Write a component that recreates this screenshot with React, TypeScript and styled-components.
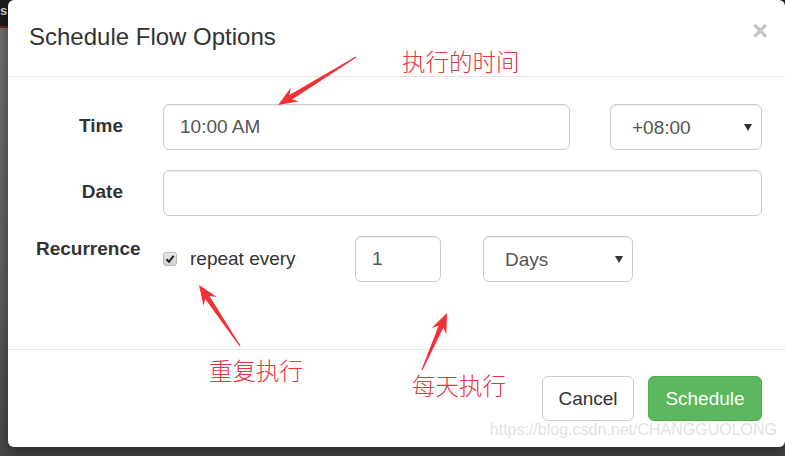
import React from "react";
import styled, { createGlobalStyle } from "styled-components";

const GlobalStyle = createGlobalStyle`
  html, body {
    margin: 0;
    padding: 0;
    background: #454545;
  }
  body {
    font-family: "Liberation Sans", Arial, sans-serif;
  }
`;

const Page = styled.div`
  position: relative;
  width: 785px;
  height: 456px;
  box-sizing: border-box;
  padding: 0 0 9px 8px;
  overflow: hidden;
  background: linear-gradient(
    to bottom,
    #1d1d1d 0,
    #1d1d1d 26px,
    #6e2626 26px,
    #6e2626 28px,
    #737373 28px,
    #626262 300px,
    #4a4a4a 447px,
    #454545 100%
  );
`;

const BehindText = styled.span`
  position: absolute;
  top: 3px;
  left: 0;
  color: #d8d8d8;
  font-size: 13px;
  font-weight: bold;
`;

const Modal = styled.div`
  position: relative;
  width: 777px;
  height: 447px;
  display: flex;
  flex-direction: column;
  background: #fff;
  border-radius: 6px;
  box-shadow: 0 5px 15px rgba(0, 0, 0, 0.5);
`;

const Header = styled.div`
  height: 77px;
  box-sizing: border-box;
  padding: 24px 21px 0;
  display: flex;
  justify-content: space-between;
  align-items: flex-start;
  border-bottom: 1px solid #e5e5e5;
`;

const Title = styled.h4`
  margin: 0;
  font-size: 24px;
  line-height: 26px;
  font-weight: 500;
  color: #333;
`;

const Close = styled.button`
  margin: -6px -4px 0 0;
  padding: 0;
  border: 0;
  background: none;
  font-family: "Liberation Sans", Arial, sans-serif;
  font-size: 27px;
  line-height: 27px;
  font-weight: bold;
  color: #c4c4c4;
  cursor: pointer;
`;

const Body = styled.div`
  padding: 27px 23px 67px 28px;
  display: flex;
  flex-direction: column;
  gap: 20px;
`;

const FormRow = styled.div`
  display: grid;
  grid-template-columns: 87px 1fr;
  column-gap: 40px;
`;

const Label = styled.label<{ $top: number }>`
  padding-top: ${(p) => p.$top}px;
  font-size: 19px;
  line-height: 24px;
  font-weight: bold;
  color: #333;
  text-align: right;
  white-space: nowrap;
`;

const Controls = styled.div<{ $cols?: string }>`
  display: grid;
  grid-template-columns: ${(p) => p.$cols || "1fr"};
  column-gap: 40px;
  align-items: center;
`;

const Input = styled.input<{ $width?: number }>`
  width: ${(p) => (p.$width ? `${p.$width}px` : "100%")};
  height: 46px;
  box-sizing: border-box;
  padding: 0 16px;
  border: 1px solid #ccc;
  border-radius: 6px;
  font-family: "Liberation Sans", Arial, sans-serif;
  font-size: 19px;
  color: #555;
  background: #fff;
  box-shadow: inset 0 1px 1px rgba(0, 0, 0, 0.075);
  outline: none;
`;

const SelectBox = styled.div<{ $width?: number }>`
  position: relative;
  width: ${(p) => (p.$width ? `${p.$width}px` : "100%")};

  &::after {
    content: "";
    position: absolute;
    right: 10px;
    top: 50%;
    margin-top: -3px;
    border-left: 4px solid transparent;
    border-right: 4px solid transparent;
    border-top: 7px solid #333;
    pointer-events: none;
  }
`;

const Select = styled.select`
  width: 100%;
  height: 46px;
  box-sizing: border-box;
  padding: 0 24px 0 21px;
  border: 1px solid #ccc;
  border-radius: 6px;
  appearance: none;
  font-family: "Liberation Sans", Arial, sans-serif;
  font-size: 19px;
  color: #555;
  background: #fff;
  box-shadow: inset 0 1px 1px rgba(0, 0, 0, 0.075);
  outline: none;
`;

const RecurrenceControls = styled.div`
  display: flex;
  align-items: center;
`;

const CheckLabel = styled.label`
  width: 192px;
  display: flex;
  align-items: center;
  gap: 13px;
  font-size: 19px;
  color: #333;
`;

const CheckBox = styled.span`
  width: 14px;
  height: 14px;
  box-sizing: border-box;
  display: flex;
  align-items: center;
  justify-content: center;
  border: 1px solid #b8b8b8;
  border-radius: 3px;
  background: linear-gradient(#e6e6e6, #d4d4d4);
`;

const Spacer = styled.div<{ $w: number }>`
  width: ${(p) => p.$w}px;
`;

const Footer = styled.div`
  flex: 1;
  border-top: 1px solid #e5e5e5;
  padding: 26px 23px 0;
  display: flex;
  justify-content: flex-end;
  align-items: flex-start;
  gap: 14px;
`;

const Button = styled.button<{ $primary?: boolean; $width: number }>`
  width: ${(p) => p.$width}px;
  height: 45px;
  padding: 0;
  border-radius: 6px;
  border: 1px solid ${(p) => (p.$primary ? "#4cae4c" : "#ccc")};
  background: ${(p) => (p.$primary ? "#5cb85c" : "#fff")};
  color: ${(p) => (p.$primary ? "#fff" : "#333")};
  font-family: "Liberation Sans", Arial, sans-serif;
  font-size: 19px;
  cursor: pointer;
`;

const Watermark = styled.span`
  position: absolute;
  right: 8px;
  bottom: 8px;
  font-size: 16px;
  color: #e2e2e2;
  white-space: nowrap;
`;

const Overlay = styled.svg`
  position: absolute;
  left: 0;
  top: 0;
  pointer-events: none;
`;

const Note = styled.span<{ $x: number; $y: number }>`
  position: absolute;
  left: ${(p) => p.$x}px;
  top: ${(p) => p.$y}px;
  font-family: "Noto Sans CJK SC", sans-serif;
  font-weight: 300;
  font-size: 23.5px;
  line-height: 1;
  color: #e8353f;
  white-space: nowrap;
  pointer-events: none;
`;

type Pt = [number, number];

// tapered arrow: thin at the tail, barbed head at the tip
const arrowPoints = (tail: Pt, tip: Pt) => {
  const dx = tip[0] - tail[0];
  const dy = tip[1] - tail[1];
  const len = Math.hypot(dx, dy);
  const ux = dx / len;
  const uy = dy / len;
  const nx = -uy;
  const ny = ux;
  const head = 20;
  const bx = tip[0] - ux * head;
  const by = tip[1] - uy * head;
  const nbx = tip[0] - ux * (head - 5);
  const nby = tip[1] - uy * (head - 5);
  const pts: Pt[] = [
    [tail[0] + nx * 0.6, tail[1] + ny * 0.6],
    [nbx + nx * 2.6, nby + ny * 2.6],
    [bx + nx * 8, by + ny * 8],
    tip,
    [bx - nx * 8, by - ny * 8],
    [nbx - nx * 2.6, nby - ny * 2.6],
    [tail[0] - nx * 0.6, tail[1] - ny * 0.6],
  ];
  return pts.map((p) => `${p[0].toFixed(1)},${p[1].toFixed(1)}`).join(" ");
};

const arrows: { tail: Pt; tip: Pt }[] = [
  { tail: [356, 57], tip: [278, 105] },
  { tail: [240, 346], tip: [199, 285] },
  { tail: [422, 370], tip: [447, 313] },
];

const App: React.FunctionComponent = () => {
  return (
    <>
      <GlobalStyle />
      <Page>
        <BehindText>s</BehindText>
        <Modal>
          <Header>
            <Title>Schedule Flow Options</Title>
            <Close aria-label="Close">×</Close>
          </Header>
          <Body>
            <FormRow>
              <Label $top={10}>Time</Label>
              <Controls $cols="1fr 152px">
                <Input type="text" defaultValue="10:00 AM" />
                <SelectBox>
                  <Select defaultValue="+08:00">
                    <option>+08:00</option>
                  </Select>
                </SelectBox>
              </Controls>
            </FormRow>
            <FormRow>
              <Label $top={10}>Date</Label>
              <Controls>
                <Input type="text" />
              </Controls>
            </FormRow>
            <FormRow>
              <Label $top={1}>Recurrence</Label>
              <RecurrenceControls>
                <CheckLabel>
                  <CheckBox>
                    <svg width="10" height="10" viewBox="0 0 10 10">
                      <path
                        d="M1.5 5.2 L4 7.8 L8.6 1.8"
                        fill="none"
                        stroke="#222"
                        strokeWidth="2"
                      />
                    </svg>
                  </CheckBox>
                  repeat every
                </CheckLabel>
                <Input type="text" defaultValue="1" $width={86} />
                <Spacer $w={42} />
                <SelectBox $width={150}>
                  <Select defaultValue="Days">
                    <option>Days</option>
                  </Select>
                </SelectBox>
              </RecurrenceControls>
            </FormRow>
          </Body>
          <Footer>
            <Button $width={92}>Cancel</Button>
            <Button $width={114} $primary>
              Schedule
            </Button>
          </Footer>
          <Watermark>https://blog.csdn.net/CHANGGUOLONG</Watermark>
        </Modal>
        <Overlay width="785" height="456" viewBox="0 0 785 456">
          {arrows.map((a, i) => (
            <polygon key={i} points={arrowPoints(a.tail, a.tip)} fill="#f03236" />
          ))}
        </Overlay>
        <Note $x={402} $y={50}>执行的时间</Note>
        <Note $x={209} $y={359}>重复执行</Note>
        <Note $x={412} $y={374}>每天执行</Note>
      </Page>
    </>
  );
};

export default App;
